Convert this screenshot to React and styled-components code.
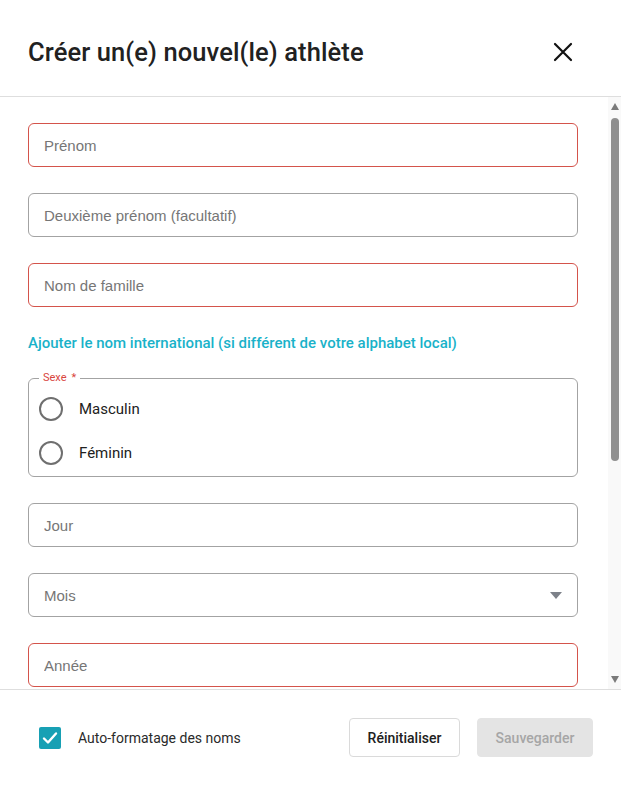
import React from 'react';
import styled, { createGlobalStyle } from 'styled-components';

const Global = createGlobalStyle`
    html, body {
        margin: 0;
        padding: 0;
        background: #fff;
    }

    * {
        box-sizing: border-box;
    }

    body {
        font-family: Roboto, 'Liberation Sans', sans-serif;
        color: #212121;
    }
`;

const Dialog = styled.div`
    width: 621px;
    height: 785px;
    display: flex;
    flex-direction: column;
    background: #fff;
`;

const Header = styled.header`
    height: 97px;
    flex: 0 0 97px;
    display: flex;
    align-items: center;
    justify-content: space-between;
    padding: 7px 46px 0 28px;
    border-bottom: 1px solid #dedede;
`;

const Title = styled.h1`
    margin: 0;
    font-size: 25.5px;
    font-weight: 500;
    color: #212121;
    letter-spacing: 0.1px;
`;

const CloseButton = styled.button`
    border: none;
    background: none;
    padding: 0;
    width: 24px;
    height: 24px;
    display: flex;
    align-items: center;
    justify-content: center;
    cursor: pointer;
`;

const Middle = styled.div`
    flex: 1;
    display: flex;
    min-height: 0;
`;

const Body = styled.div`
    flex: 1;
    overflow: hidden;
    padding: 26px 30px 0 28px;
`;

const ScrollTrack = styled.div`
    width: 13px;
    flex: 0 0 13px;
    background: #f9f9f9;
    display: flex;
    flex-direction: column;
    align-items: center;
    padding: 3px 0 3px 1px;
`;

const Arrow = styled.span`
    width: 0;
    height: 0;
    border-left: 4px solid transparent;
    border-right: 4px solid transparent;
    ${p => (p.down ? 'border-top: 7px solid #7a7a7a;' : 'border-bottom: 7px solid #7a7a7a;')}
    margin: ${p => (p.down ? 'auto 0 3px' : '3px 0 0')};
`;

const Thumb = styled.span`
    width: 8px;
    height: 343px;
    margin-top: 8px;
    border-radius: 4px;
    background: #8f8f8f;
`;

const Field = styled.div`
    height: 44px;
    margin-bottom: 26px;
    border: 1px solid ${p => (p.error ? '#d4534b' : '#a3a3a3')};
    border-radius: 6px;
    display: flex;
    align-items: center;
    padding: 0 15px;
`;

const Input = styled.input`
    border: none;
    outline: none;
    width: 100%;
    background: transparent;
    font-family: 'Liberation Sans', Arial, sans-serif;
    font-size: 15px;
    color: #212121;
    padding: 0;

    &::placeholder {
        color: #767676;
    }
`;

const Placeholder = styled.span`
    flex: 1;
    font-family: 'Liberation Sans', Arial, sans-serif;
    font-size: 15px;
    color: #767676;
`;

const Caret = styled.span`
    width: 0;
    height: 0;
    border-left: 6px solid transparent;
    border-right: 6px solid transparent;
    border-top: 7px solid #7d8189;
`;

const LinkText = styled.a`
    display: block;
    margin: 0 0 18px;
    font-size: 15px;
    font-weight: 500;
    color: #19b2c9;
    text-decoration: none;
    line-height: 20px;
`;

const Fieldset = styled.fieldset`
    margin: 0 0 26px;
    padding: 0 10px 8px 10px;
    border: 1px solid #a3a3a3;
    border-radius: 6px;
    height: 106px;
`;

const Legend = styled.legend`
    padding: 0 4px;
    margin-left: 0;
    font-size: 11px;
    color: #d9463e;
    line-height: 14px;

    span {
        margin-left: 5px;
    }
`;

const RadioRow = styled.label`
    display: flex;
    align-items: center;
    gap: 16px;
    height: 44px;
    font-size: 15px;
    color: #212121;
    cursor: pointer;
    margin-top: ${p => (p.first ? '2px' : '0')};
`;

const RadioCircle = styled.span`
    width: 24px;
    height: 24px;
    border: 2px solid #6f6f6f;
    border-radius: 50%;
    flex: 0 0 24px;
`;

const Footer = styled.footer`
    flex: 0 0 96px;
    height: 96px;
    border-top: 1px solid #dedede;
    display: flex;
    align-items: center;
    padding: 0 28px 0 39px;
`;

const CheckRow = styled.label`
    display: flex;
    align-items: center;
    gap: 17px;
    flex: 1;
    font-size: 14px;
    color: #2a2a2a;
`;

const CheckBox = styled.span`
    width: 22px;
    height: 22px;
    border-radius: 2px;
    background: #17a0b4;
    display: flex;
    align-items: center;
    justify-content: center;
`;

const Button = styled.button`
    height: 39px;
    width: ${p => p.w}px;
    padding: 0;
    border-radius: 4px;
    font-family: Roboto, 'Liberation Sans', sans-serif;
    font-size: 14px;
    font-weight: 500;
    border: 1px solid ${p => (p.disabled ? '#e4e4e4' : '#dadada')};
    background: ${p => (p.disabled ? '#e4e4e4' : '#fff')};
    color: ${p => (p.disabled ? '#a6a6a6' : '#212121')};
    margin-left: ${p => p.ml || 0}px;
`;

function App() {
    return (
        <>
            <Global />
            <Dialog>
                <Header>
                    <Title>Créer un(e) nouvel(le) athlète</Title>
                    <CloseButton aria-label="Fermer">
                        <svg width="20" height="20" viewBox="0 0 20 20">
                            <path d="M2 2 L18 18 M18 2 L2 18" stroke="#111" strokeWidth="2.2" strokeLinecap="round" />
                        </svg>
                    </CloseButton>
                </Header>

                <Middle>
                    <Body>
                        <Field error>
                            <Input placeholder="Prénom" />
                        </Field>
                        <Field>
                            <Input placeholder="Deuxième prénom (facultatif)" />
                        </Field>
                        <Field error>
                            <Input placeholder="Nom de famille" />
                        </Field>

                        <LinkText href="#">Ajouter le nom international (si différent de votre alphabet local)</LinkText>

                        <Fieldset>
                            <Legend>Sexe<span>*</span></Legend>
                            <RadioRow first>
                                <RadioCircle />
                                Masculin
                            </RadioRow>
                            <RadioRow>
                                <RadioCircle />
                                Féminin
                            </RadioRow>
                        </Fieldset>

                        <Field>
                            <Input placeholder="Jour" />
                        </Field>
                        <Field>
                            <Placeholder>Mois</Placeholder>
                            <Caret />
                        </Field>
                        <Field error>
                            <Input placeholder="Année" />
                        </Field>
                    </Body>
                    <ScrollTrack>
                        <Arrow />
                        <Thumb />
                        <Arrow down />
                    </ScrollTrack>
                </Middle>

                <Footer>
                    <CheckRow>
                        <CheckBox>
                            <svg width="18" height="18" viewBox="0 0 18 18">
                                <path d="M3 9.5 L7 13.5 L15 4.5" fill="none" stroke="#fff" strokeWidth="2.4" strokeLinecap="round" strokeLinejoin="round" />
                            </svg>
                        </CheckBox>
                        Auto-formatage des noms
                    </CheckRow>
                    <Button w={111}>Réinitialiser</Button>
                    <Button w={116} ml={17} disabled>Sauvegarder</Button>
                </Footer>
            </Dialog>
        </>
    );
}

export default App;
